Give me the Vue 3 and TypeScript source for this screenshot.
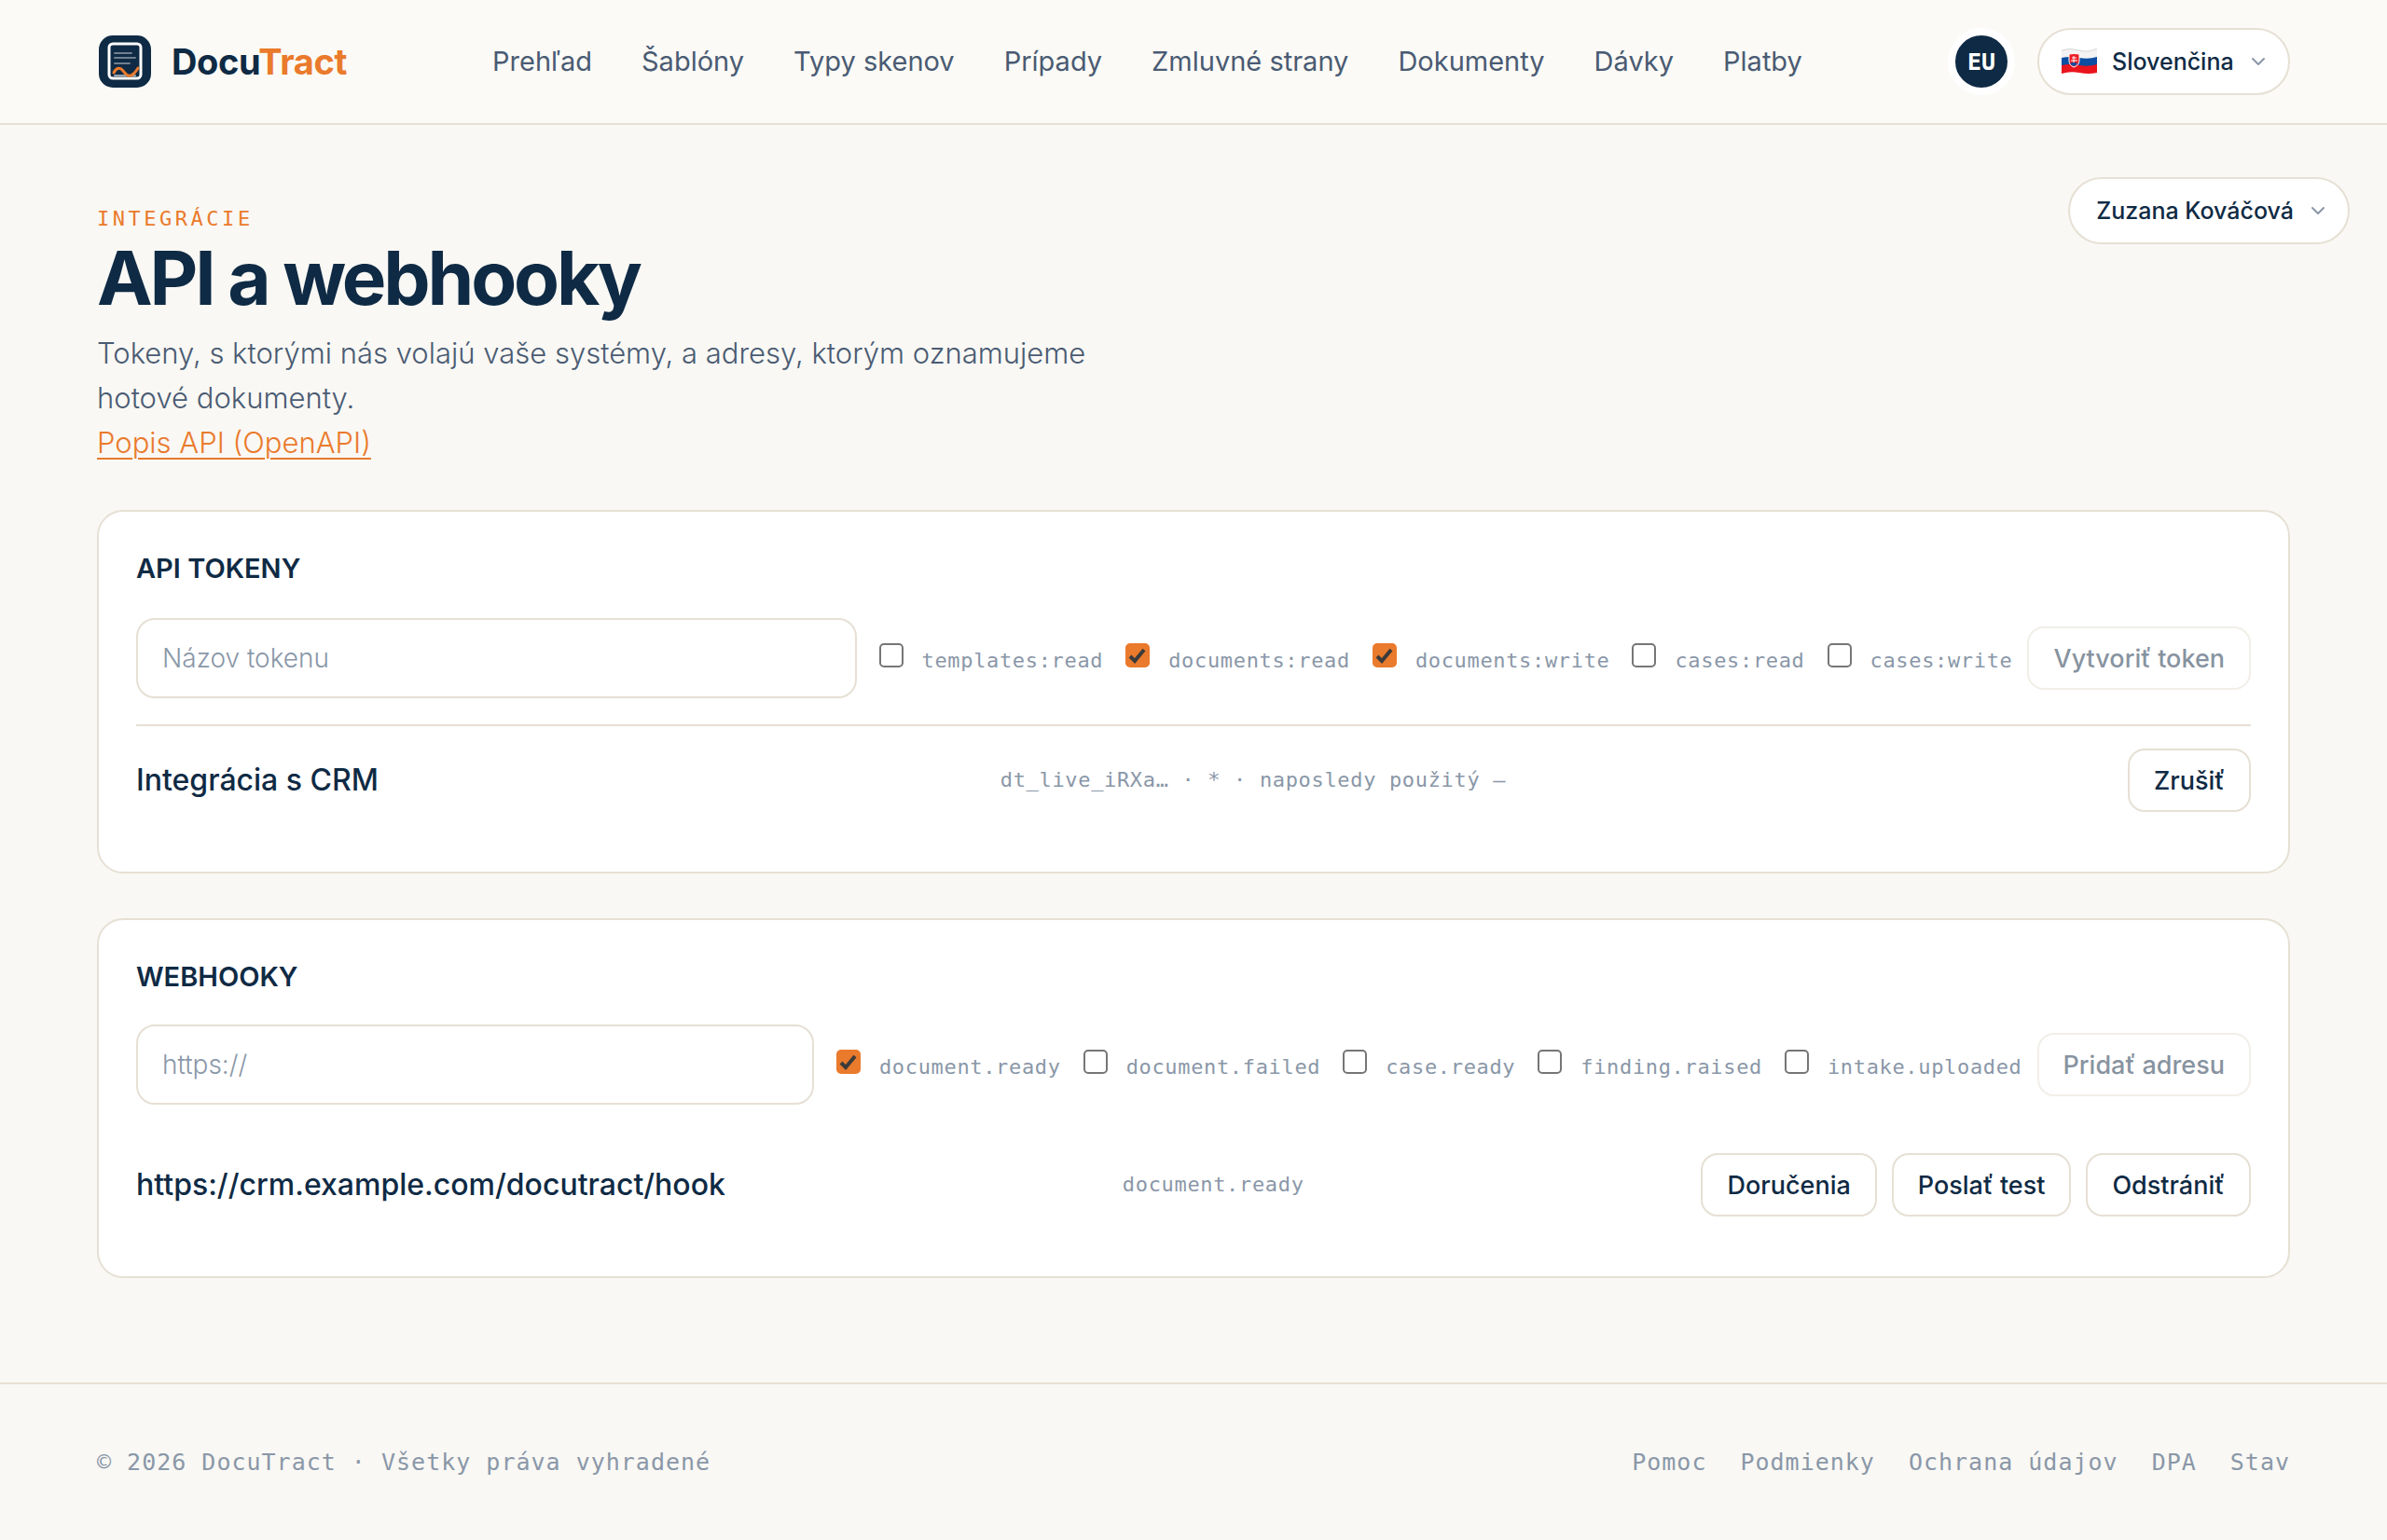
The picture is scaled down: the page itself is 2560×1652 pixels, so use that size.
<script setup lang="ts">
import { ref } from 'vue'

interface Scope {
  name: string
  on: boolean
}

const navItems: string[] = [
  'Prehľad',
  'Šablóny',
  'Typy skenov',
  'Prípady',
  'Zmluvné strany',
  'Dokumenty',
  'Dávky',
  'Platby',
]
const footerLinks: string[] = ['Pomoc', 'Podmienky', 'Ochrana údajov', 'DPA', 'Stav']

const tokenName = ref('')
const hookUrl = ref('')
const language = ref('sk')

const scopes = ref<Scope[]>([
  { name: 'templates:read', on: false },
  { name: 'documents:read', on: true },
  { name: 'documents:write', on: true },
  { name: 'cases:read', on: false },
  { name: 'cases:write', on: false },
])
const events = ref<Scope[]>([
  { name: 'document.ready', on: true },
  { name: 'document.failed', on: false },
  { name: 'case.ready', on: false },
  { name: 'finding.raised', on: false },
  { name: 'intake.uploaded', on: false },
])
</script>

<template>
  <div class="page">
    <header class="topbar">
      <a class="brand" href="#">
        <svg class="logo" viewBox="0 0 60 60" aria-hidden="true">
          <rect x="2" y="2" width="56" height="56" rx="15" fill="#0f2a44" />
          <rect x="13" y="11" width="34" height="37" rx="4" fill="none" stroke="#fff" stroke-width="3" />
          <g stroke="#6f7f90" stroke-width="2" stroke-linecap="round">
            <path d="M19 21h18M19 26h22M19 32h16" />
            <path d="M19 45h22" stroke="#9aa5b1" />
          </g>
          <path
            d="M18 42c3-6 7-6 10-2s6 7 10 4 4-4 6-7"
            fill="none"
            stroke="#ea7a2c"
            stroke-width="3"
            stroke-linecap="round"
          />
        </svg>
        <span class="brand-name">Docu<span class="accent">Tract</span></span>
      </a>

      <nav class="nav">
        <a v-for="item in navItems" :key="item" href="#">{{ item }}</a>
      </nav>

      <div class="tools">
        <button class="region" type="button">EU</button>
        <label class="pill language">
          <svg class="flag" viewBox="0 0 38 28" aria-hidden="true">
            <path d="M0 2q9-3 19 0t19-2v10q-9 3-19 1T0 10z" fill="#f3f3f3" />
            <path d="M0 2q9-3 19 0t19-2" fill="none" stroke="#d4d4d4" stroke-width="1" />
            <path d="M0 10q9-2 19 0t19-1v10q-9 2-19 0T0 19z" fill="#0b4ea2" />
            <path d="M0 18q9-2 19 0t19-1v9q-9 2-19 0T0 27z" fill="#ea141d" />
            <path d="M8 6q5-1 11 0v7q0 5-6 7-5-2-5-7z" fill="#ee1c25" stroke="#fff" stroke-width="1" />
            <path d="M13 8v8M11 10h5M10 13h7" stroke="#fff" stroke-width="1" />
            <path d="M9 16q4-2 8 0-1 2-4 3-3-1-4-3z" fill="#0b4ea2" />
          </svg>
          <select v-model="language" aria-label="Jazyk">
            <option value="sk">Slovenčina</option>
          </select>
          <svg class="chevron" viewBox="0 0 16 10" aria-hidden="true"><path d="M2 2l6 6 6-6" /></svg>
        </label>
      </div>
    </header>

    <button class="pill user" type="button">
      Zuzana Kováčová
      <svg class="chevron" viewBox="0 0 16 10" aria-hidden="true"><path d="M2 2l6 6 6-6" /></svg>
    </button>

    <main class="content">
      <div class="eyebrow">INTEGRÁCIE</div>
      <h1>API a webhooky</h1>
      <p class="lead">
        Tokeny, s ktorými nás volajú vaše systémy, a adresy, ktorým oznamujeme hotové dokumenty.<br />
        <a href="#">Popis API (OpenAPI)</a>
      </p>

      <section class="card divided">
        <h2>API TOKENY</h2>
        <form class="form" @submit.prevent>
          <input v-model="tokenName" class="field" type="text" placeholder="Názov tokenu" aria-label="Názov tokenu" />
          <label v-for="scope in scopes" :key="scope.name" class="check">
            <input v-model="scope.on" type="checkbox" />
            <span class="mono">{{ scope.name }}</span>
          </label>
          <button class="btn" type="submit" :disabled="!tokenName">Vytvoriť token</button>
        </form>
        <div class="row">
          <span class="name">Integrácia s CRM</span>
          <span class="mono">dt_live_iRXa… · * · naposledy použitý —</span>
          <div class="actions">
            <button class="btn" type="button">Zrušiť</button>
          </div>
        </div>
      </section>

      <section class="card">
        <h2>WEBHOOKY</h2>
        <form class="form" @submit.prevent>
          <input v-model="hookUrl" class="field" type="text" placeholder="https://" aria-label="Adresa webhooku" />
          <label v-for="event in events" :key="event.name" class="check">
            <input v-model="event.on" type="checkbox" />
            <span class="mono">{{ event.name }}</span>
          </label>
          <button class="btn" type="submit" :disabled="!hookUrl">Pridať adresu</button>
        </form>
        <div class="row">
          <span class="name">https://crm.example.com/docutract/hook</span>
          <span class="mono">document.ready</span>
          <div class="actions">
            <button class="btn" type="button">Doručenia</button>
            <button class="btn" type="button">Poslať test</button>
            <button class="btn" type="button">Odstrániť</button>
          </div>
        </div>
      </section>
    </main>

    <footer class="footer">
      <span>© 2026 DocuTract · Všetky práva vyhradené</span>
      <nav class="footer-links">
        <a v-for="link in footerLinks" :key="link" href="#">{{ link }}</a>
      </nav>
    </footer>
  </div>
</template>

<style>
body {
  background: #f9f8f4;
}
</style>

<style scoped>
.page {
  --navy: #0f2a44;
  --orange: #ea7a2c;
  --slate: #4a5b73;
  --muted: #8a97a8;
  --line: #e6e0d4;
  --mono: 'DejaVu Sans Mono', 'Liberation Mono', monospace;
  position: relative;
  color: var(--navy);
  font-family: Inter, 'Liberation Sans', sans-serif;
}
.page *,
.page {
  box-sizing: border-box;
}
a {
  color: inherit;
  text-decoration: none;
}
button,
select,
input {
  font-family: inherit;
  color: inherit;
}

.topbar {
  display: flex;
  align-items: center;
  justify-content: space-between;
  padding: 30px 104px;
  background: #fbfaf6;
  border-bottom: 2px solid var(--line);
}
.brand {
  display: flex;
  align-items: center;
  gap: 20px;
}
.logo {
  width: 60px;
  height: 60px;
}
.brand-name {
  font-size: 38px;
  line-height: 48px;
  font-weight: 700;
  letter-spacing: -0.01em;
}
.accent {
  color: var(--orange);
}
.nav {
  display: flex;
  gap: 53px;
  font-size: 29px;
  line-height: 40px;
  color: var(--slate);
}
.tools {
  display: flex;
  align-items: center;
  gap: 24px;
}
.region {
  width: 72px;
  height: 72px;
  padding: 0;
  border: 8px solid #fff;
  border-radius: 50%;
  background: var(--navy);
  color: #fff;
  font-family: var(--mono);
  font-size: 25px;
  font-weight: 700;
}
.pill {
  display: flex;
  align-items: center;
  height: 72px;
  padding: 0 24px;
  border: 2px solid var(--line);
  border-radius: 36px;
  background: #fff;
  font-size: 25px;
  font-weight: 500;
}
.flag {
  width: 38px;
  height: 28px;
  margin-right: 16px;
}
.language select {
  appearance: none;
  padding: 0;
  border: 0;
  background: none;
  font-size: 25px;
  font-weight: 500;
}
.chevron {
  width: 16px;
  height: 10px;
  margin-left: 18px;
  fill: none;
  stroke: var(--muted);
  stroke-width: 2;
  stroke-linecap: round;
  stroke-linejoin: round;
}
/* The account menu floats over the page header area. */
.user {
  position: absolute;
  top: 190px;
  right: 40px;
  padding-left: 28px;
}

.content {
  padding: 83px 104px 112px;
}
.eyebrow {
  font-family: var(--mono);
  font-size: 22px;
  line-height: 36px;
  letter-spacing: 0.16em;
  color: var(--orange);
}
h1 {
  margin: 0 0 12px;
  font-size: 80px;
  line-height: 90px;
  font-weight: 700;
  letter-spacing: -0.04em;
}
.lead {
  max-width: 1120px;
  margin: 0 0 48px;
  font-size: 31px;
  line-height: 48px;
  font-weight: 300;
  color: var(--slate);
}
.lead a {
  color: var(--orange);
  text-decoration: underline;
  text-decoration-thickness: 2px;
  text-underline-offset: 5px;
}

.card {
  padding: 40px;
  border: 2px solid var(--line);
  border-radius: 28px;
  background: #fff;
}
.card + .card {
  margin-top: 48px;
}
h2 {
  margin: 0 0 30px;
  font-size: 29px;
  line-height: 42px;
  font-weight: 600;
}
.form {
  display: flex;
  align-items: center;
  gap: 16px;
  margin-bottom: 28px;
}
.divided .form {
  margin-top: 32px;
}
.divided .row {
  border-top: 2px solid var(--line);
}
.field {
  flex: 1;
  min-width: 0;
  height: 86px;
  padding: 0 26px;
  border: 2px solid var(--line);
  border-radius: 20px;
  background: #fff;
  font-size: 28px;
  font-weight: 300;
}
.field::placeholder {
  color: var(--muted);
}
.check {
  display: flex;
  align-items: baseline;
  gap: 20px;
  padding: 4px 0 0 8px;
}
.check input {
  appearance: none;
  width: 26px;
  height: 26px;
  margin: 0;
  border: 2px solid #767676;
  border-radius: 5px;
  background: #fff;
}
.check input:checked {
  border-color: var(--orange);
  background: var(--orange)
    url("data:image/svg+xml,%3Csvg xmlns='http://www.w3.org/2000/svg' viewBox='0 0 22 22'%3E%3Cpath d='M3 12l5 5L18 5' fill='none' stroke='%233b3b3b' stroke-width='4'/%3E%3C/svg%3E")
    center / 22px 22px no-repeat;
}
.mono {
  font-family: var(--mono);
  font-size: 22px;
  line-height: 36px;
  letter-spacing: 0.03em;
  color: var(--muted);
  white-space: nowrap;
}
.btn {
  height: 68px;
  padding: 0 26px;
  border: 2px solid var(--line);
  border-radius: 18px;
  background: #fff;
  font-size: 27px;
  font-weight: 500;
  white-space: nowrap;
}
.btn:disabled {
  opacity: 0.5;
}
.row {
  display: flex;
  align-items: center;
  justify-content: space-between;
  padding: 24px 0;
}
.name {
  font-size: 32px;
  line-height: 48px;
  font-weight: 500;
}
.actions {
  display: flex;
  gap: 16px;
}

.footer {
  display: flex;
  justify-content: space-between;
  padding: 64px 104px;
  border-top: 2px solid var(--line);
  font-family: var(--mono);
  font-size: 25px;
  line-height: 40px;
  letter-spacing: 0.04em;
  color: var(--muted);
}
.footer-links {
  display: flex;
  gap: 36px;
}
</style>
